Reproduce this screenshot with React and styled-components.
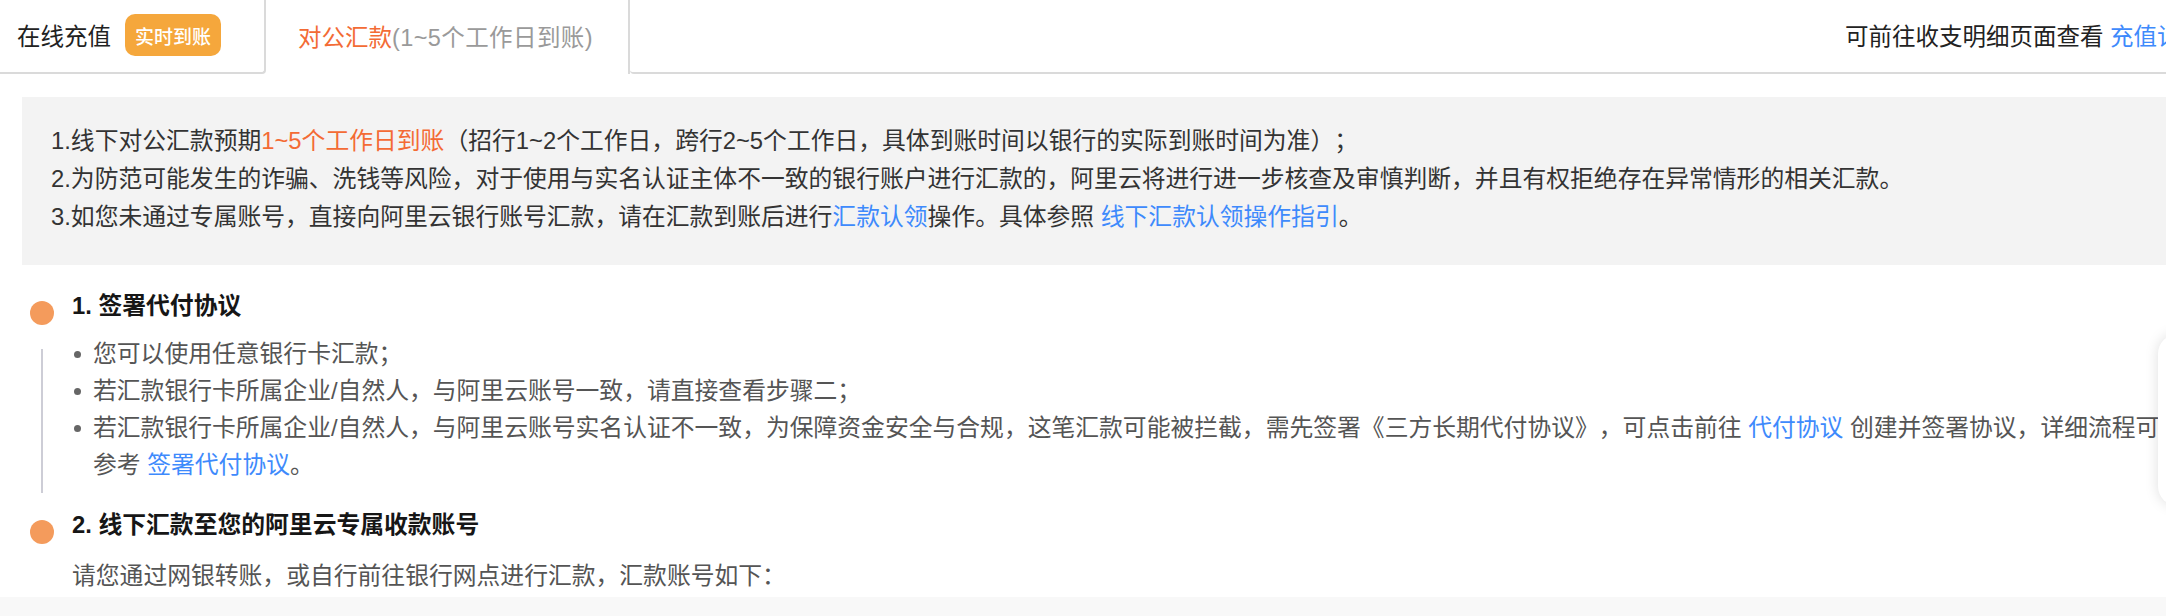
import React from 'react'
import styled, { createGlobalStyle } from 'styled-components'

const GlobalStyle = createGlobalStyle`
  html, body {
    margin: 0;
    padding: 0;
    overflow: hidden;
    background: #fff;
  }
  body {
    font-family: "Liberation Sans", "Noto Sans CJK SC", sans-serif;
    color: #333;
    text-spacing-trim: space-all;
  }
`

const Page = styled.div`
  width: 2220px;
  font-size: 23.8px;
`

const TabBar = styled.div`
  display: flex;
  height: 74px;
  font-size: 23.5px;
`

const Tab = styled.div`
  box-sizing: border-box;
  display: flex;
  align-items: center;
  width: ${p => p.width}px;
  padding-left: ${p => p.padLeft}px;
  padding-bottom: 2px;
  border-right: 2px solid #dadada;
  border-bottom: ${p => (p.active ? 'none' : '2px solid #dadada')};
  border-bottom-right-radius: ${p => (p.active ? 0 : 4)}px;
  color: #222;
  white-space: nowrap;
`

const Badge = styled.span`
  display: inline-flex;
  align-items: center;
  justify-content: center;
  width: 96px;
  height: 42px;
  margin-left: 14px;
  border-radius: 10px;
  background: #f5a73c;
  color: #fff;
  font-size: 19px;
  font-weight: 500;
`

const Orange = styled.span`
  color: #f36b35;
`

const Muted = styled.span`
  color: #9a9a9a;
  letter-spacing: 0.4px;
`

const Link = styled.a`
  color: #3e8afc;
  text-decoration: none;
`

const TabExtra = styled.div`
  flex: 1;
  display: flex;
  align-items: center;
  justify-content: flex-end;
  padding-right: 16px;
  padding-bottom: 2px;
  border-bottom: 2px solid #dadada;
  border-bottom-left-radius: 4px;
  color: #222;
  white-space: nowrap;
`

const Main = styled.div`
  padding: 23px 0 0 22px;
`

const Notice = styled.div`
  background: #f3f3f3;
  padding: 25px 0 29px 29px;
  line-height: 38px;
  color: #333;
  white-space: nowrap;
`

const Step = styled.div`
  margin-top: ${p => p.gap}px;
`

const StepHead = styled.div`
  display: flex;
  align-items: center;
  line-height: 36px;
`

const Dot = styled.span`
  flex: none;
  width: 24px;
  height: 24px;
  margin: 14px 18px 0 8px;
  border-radius: 50%;
  background: #f49b5c;
`

const StepTitle = styled.h3`
  margin: 0;
  font-size: 23.8px;
  font-weight: 700;
  color: #161616;
`

const StepBody = styled.div`
  display: flex;
  margin-top: 10px;
`

const Rail = styled.div`
  flex: none;
  width: 2px;
  margin: 14px 0 -10px 19px;
  background: #cdcdd6;
`

const Bullets = styled.ul`
  margin: 0 0 0 31px;
  padding: 0;
  list-style: none;
`

const Bullet = styled.li`
  display: flex;
  align-items: flex-start;
  line-height: 37px;
  color: #555;
  white-space: nowrap;

  &::before {
    content: '';
    flex: none;
    width: 7px;
    height: 7px;
    margin: 16px 12px 0 0;
    border-radius: 50%;
    background: #666;
  }
`

const Desc = styled.p`
  margin: 13px 0 0 50px;
  line-height: 37px;
  color: #555;
  white-space: nowrap;
`

const Footer = styled.div`
  height: 40px;
  margin-top: 3px;
  background: #f8f8f8;
`

const SideCard = styled.div`
  position: fixed;
  top: 334px;
  right: -34px;
  width: 42px;
  height: 172px;
  border-radius: 20px;
  background: #fff;
  box-shadow: 0 0 14px rgba(0, 0, 0, 0.13);
`

export default function App() {
  return (
    <Page>
      <GlobalStyle />
      <TabBar>
        <Tab width={266} padLeft={17}>
          在线充值<Badge>实时到账</Badge>
        </Tab>
        <Tab width={364} padLeft={32} active>
          <Orange>对公汇款</Orange>
          <Muted>(1~5个工作日到账)</Muted>
        </Tab>
        <TabExtra>
          可前往收支明细页面查看&nbsp;<Link href="#">充值记录</Link>
        </TabExtra>
      </TabBar>

      <Main>
        <Notice>
          <div>
            1.线下对公汇款预期<Orange>1~5个工作日到账</Orange>（招行1~2个工作日，跨行2~5个工作日，具体到账时间以银行的实际到账时间为准）；
          </div>
          <div>
            2.为防范可能发生的诈骗、洗钱等风险，对于使用与实名认证主体不一致的银行账户进行汇款的，阿里云将进行进一步核查及审慎判断，并且有权拒绝存在异常情形的相关汇款。
          </div>
          <div>
            3.如您未通过专属账号，直接向阿里云银行账号汇款，请在汇款到账后进行<Link href="#">汇款认领</Link>操作。具体参照 <Link href="#">线下汇款认领操作指引</Link>。
          </div>
        </Notice>

        <Step gap={22}>
          <StepHead>
            <Dot />
            <StepTitle>1. 签署代付协议</StepTitle>
          </StepHead>
          <StepBody>
            <Rail />
            <Bullets>
              <Bullet>您可以使用任意银行卡汇款；</Bullet>
              <Bullet>若汇款银行卡所属企业/自然人，与阿里云账号一致，请直接查看步骤二；</Bullet>
              <Bullet>
                <span>
                  若汇款银行卡所属企业/自然人，与阿里云账号实名认证不一致，为保障资金安全与合规，这笔汇款可能被拦截，需先签署《三方长期代付协议》，可点击前往 <Link href="#">代付协议</Link> 创建并签署协议，详细流程可
                  <br />
                  参考 <Link href="#">签署代付协议</Link>。
                </span>
              </Bullet>
            </Bullets>
          </StepBody>
        </Step>

        <Step gap={23}>
          <StepHead>
            <Dot />
            <StepTitle>2. 线下汇款至您的阿里云专属收款账号</StepTitle>
          </StepHead>
          <Desc>请您通过网银转账，或自行前往银行网点进行汇款，汇款账号如下：</Desc>
        </Step>
      </Main>
      <Footer />
      <SideCard />
    </Page>
  )
}
